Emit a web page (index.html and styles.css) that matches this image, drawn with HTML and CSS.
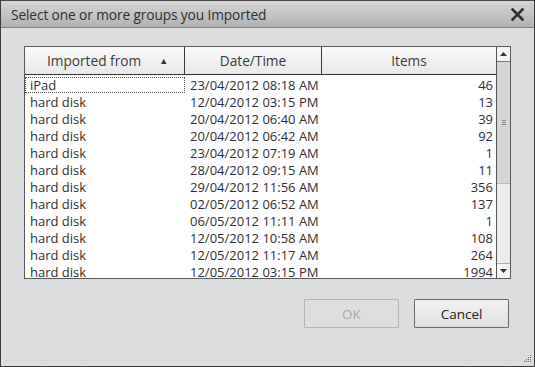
FILE: index.html
```html
<!DOCTYPE html>
<html>
<head>
<meta charset="utf-8">
<link rel="stylesheet" href="styles.css">
</head>
<body>
<div class="window">
  <div class="titlebar">
    <span class="title">Select one or more groups you Imported</span>
    <svg class="close" width="13" height="13" viewBox="0 0 13 13"><path d="M1.5 1.5 L11.5 11.5 M11.5 1.5 L1.5 11.5" stroke="#2e2e2e" stroke-width="2.6" stroke-linecap="square"/></svg>
  </div>
  <div class="content">
    <div class="table">
      <div class="list">
        <div class="head">
          <div class="hc c1">Imported from <span class="sort">▲</span></div>
          <div class="hc c2">Date/Time</div>
          <div class="hc c3">Items</div>
        </div>
        <div class="rows">
          <div class="row"><div class="c1 focus">iPad</div><div class="c2">23/04/2012 08:18 AM</div><div class="c3">46</div></div>
          <div class="row"><div class="c1">hard disk</div><div class="c2">12/04/2012 03:15 PM</div><div class="c3">13</div></div>
          <div class="row"><div class="c1">hard disk</div><div class="c2">20/04/2012 06:40 AM</div><div class="c3">39</div></div>
          <div class="row"><div class="c1">hard disk</div><div class="c2">20/04/2012 06:42 AM</div><div class="c3">92</div></div>
          <div class="row"><div class="c1">hard disk</div><div class="c2">23/04/2012 07:19 AM</div><div class="c3">1</div></div>
          <div class="row"><div class="c1">hard disk</div><div class="c2">28/04/2012 09:15 AM</div><div class="c3">11</div></div>
          <div class="row"><div class="c1">hard disk</div><div class="c2">29/04/2012 11:56 AM</div><div class="c3">356</div></div>
          <div class="row"><div class="c1">hard disk</div><div class="c2">02/05/2012 06:52 AM</div><div class="c3">137</div></div>
          <div class="row"><div class="c1">hard disk</div><div class="c2">06/05/2012 11:11 AM</div><div class="c3">1</div></div>
          <div class="row"><div class="c1">hard disk</div><div class="c2">12/05/2012 10:58 AM</div><div class="c3">108</div></div>
          <div class="row"><div class="c1">hard disk</div><div class="c2">12/05/2012 11:17 AM</div><div class="c3">264</div></div>
          <div class="row"><div class="c1">hard disk</div><div class="c2">12/05/2012 03:15 PM</div><div class="c3">1994</div></div>
        </div>
      </div>
      <div class="scrollbar">
        <div class="arrow up"><svg width="7" height="4" viewBox="0 0 7 4"><path d="M0 4 L3.5 0 L7 4 Z" fill="#333"/></svg></div>
        <div class="thumb"><span class="grip"></span></div>
        <div class="track"></div>
        <div class="arrow down"><svg width="7" height="4" viewBox="0 0 7 4"><path d="M0 0 L3.5 4 L7 0 Z" fill="#333"/></svg></div>
      </div>
    </div>
    <div class="buttons">
      <button class="btn disabled">OK</button>
      <button class="btn">Cancel</button>
    </div>
  </div>
  <div class="footer">
    <svg class="resize" width="8" height="8" viewBox="0 0 8 8">
      <g fill="#6a6a6a">
        <rect x="6" y="0" width="1" height="1"/>
        <rect x="4" y="2" width="1" height="1"/><rect x="6" y="2" width="1" height="1"/>
        <rect x="2" y="4" width="1" height="1"/><rect x="4" y="4" width="1" height="1"/><rect x="6" y="4" width="1" height="1"/>
        <rect x="0" y="6" width="1" height="1"/><rect x="2" y="6" width="1" height="1"/><rect x="4" y="6" width="1" height="1"/><rect x="6" y="6" width="1" height="1"/>
      </g>
    </svg>
  </div>
</div>
</body>
</html>
```

FILE: styles.css
```css
html, body {
  margin: 0;
  padding: 0;
  background: #dcdddf;
}
body {
  font-family: "Open Sans", "Noto Sans", sans-serif;
  color: #2a2a2a;
}
.window {
  width: 535px;
  height: 367px;
  box-sizing: border-box;
  border: 1px solid #3c3c3c;
  border-top: 1px solid #4a4a4a;
  background: #dcdddf;
  display: flex;
  flex-direction: column;
}
.titlebar {
  height: 27px;
  flex: none;
  box-sizing: border-box;
  border-bottom: 1px solid #7e7e7e;
  background: linear-gradient(#d6d6d6, #c2c2c2 55%, #b1b1b1);
  display: flex;
  align-items: center;
  justify-content: space-between;
  padding: 0 10px 0 10px;
}
.title {
  font-size: 13.7px;
  color: #2e2e2e;
  letter-spacing: -0.1px;
}
.close {
  display: block;
}
.content {
  flex: 1;
  padding: 18px 23px 0 23px;
  display: flex;
  flex-direction: column;
}
.table {
  width: 487px;
  height: 233px;
  box-sizing: border-box;
  border: 1px solid #5a5a5a;
  background: #fff;
  display: flex;
  overflow: hidden;
}
.list {
  flex: 1;
  display: flex;
  flex-direction: column;
  overflow: hidden;
}
.head {
  display: flex;
  height: 28px;
  flex: none;
  box-sizing: border-box;
  border-bottom: 1px solid #333;
  background: linear-gradient(#fbfbfb, #e8e8e8);
}
.hc {
  display: flex;
  align-items: center;
  justify-content: center;
  font-size: 13.7px;
  color: #3a3a3a;
  box-sizing: border-box;
}
.hc.c1, .hc.c2 {
  border-right: 1px solid #3a3a3a;
}
.c1 { width: 160px; flex: none; box-sizing: border-box; }
.c2 { width: 137px; flex: none; box-sizing: border-box; }
.c3 { flex: 1; box-sizing: border-box; }
.hc.c1 { padding-left: 6px; }
.sort {
  font-size: 9px;
  margin-left: 18px;
  color: #333;
}
.rows {
  padding-top: 2px;
}
.row {
  display: flex;
  height: 17px;
  font-size: 13px;
  line-height: 16px;
  color: #2f2f2f;
}
.row .c1 { padding-left: 5px; }
.row .c2 { padding-left: 5px; }
.row .c3 { text-align: right; padding-right: 3px; }
.row .c1.focus {
  outline: 1px dotted #555;
  outline-offset: -1px;
  height: 16px;
}
.scrollbar {
  width: 13px;
  flex: none;
  border-left: 1px solid #555;
  background: #ececec;
  display: flex;
  flex-direction: column;
}
.arrow {
  height: 14px;
  flex: none;
  display: flex;
  align-items: center;
  justify-content: center;
  background: #f4f4f4;
  border-bottom: 1px solid #777;
}
.arrow.down {
  border-bottom: none;
  border-top: 1px solid #aaa;
}
.thumb {
  height: 121px;
  flex: none;
  background: #d6d6d6;
  border-bottom: 1px solid #bbb;
  display: flex;
  align-items: center;
  justify-content: center;
}
.grip {
  width: 4px;
  height: 5px;
  border-top: 1px solid #888;
  border-bottom: 1px solid #888;
  box-sizing: border-box;
}
.grip::after {
  content: "";
  display: block;
  height: 1px;
  margin-top: 1px;
  background: #888;
}
.track {
  flex: 1;
}
.buttons {
  display: flex;
  justify-content: flex-end;
  gap: 15px;
  margin-top: 20px;
  padding-right: 2px;
}
.btn {
  width: 95px;
  height: 29px;
  font-family: "Open Sans", "Noto Sans", sans-serif;
  font-size: 13.5px;
  color: #222;
  border: 1px solid #6a6a6a;
  border-radius: 1px;
  background: linear-gradient(#f2f2f2, #e0e0e0);
  padding: 0;
}
.btn.disabled {
  color: #a9a9a9;
  border-color: #b5b5b5;
  background: #dedede;
}
.footer {
  height: 5px;
  flex: none;
  border-top: 1px dashed #cdced0;
  display: flex;
  justify-content: flex-end;
  margin: 0 2px 0 4px;
}
.resize {
  display: block;
  margin-top: -6px;
}
```
